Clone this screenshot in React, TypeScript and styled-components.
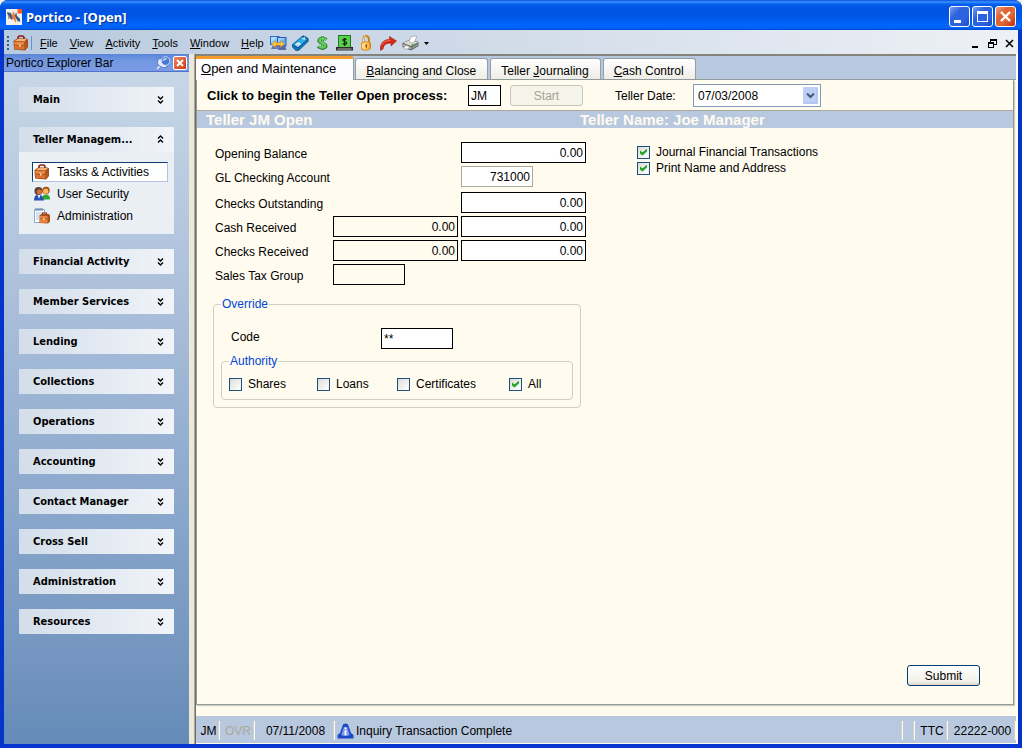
import React, { useState } from "react";
import styled, { createGlobalStyle, css } from "styled-components";

const Global = createGlobalStyle`
  * { box-sizing: border-box; }
  body { margin: 0; background: #f4f2e8; }
  body, button, input, select {
    font-family: "Liberation Sans", Arial, sans-serif;
    font-size: 12px;
    color: #000;
  }
  button { border: 0; background: none; padding: 0; }
`;

/* ---------- window frame ---------- */

const Window = styled.div`
  display: flex;
  flex-direction: column;
  min-height: 100vh;
  border-radius: 8px 8px 0 0;
  overflow: hidden;
  background: #0a4be0;
`;

const TitleBar = styled.header`
  display: flex;
  align-items: center;
  gap: 4px;
  height: 30px;
  padding: 3px 6px 0;
  background: linear-gradient(#0a4fdc 0, #3a93ff 2px, #0560ee 4px, #0053e2 8px, #0055e6 16px, #0066ff 25px, #0062f8 28px, #0048cc 30px);
`;

const Title = styled.h1`
  flex: 1;
  margin: 0;
  font: bold 13px/18px "Noto Sans", sans-serif;
  color: #fff;
  text-shadow: 1px 1px #0a2f8c;
`;

const CaptionButton = styled.button<{ $close?: boolean }>`
  display: flex;
  width: 21px;
  height: 21px;
  margin-left: -2px;
  border: 1px solid #fff;
  border-radius: 3px;
  background: ${(p) =>
    p.$close
      ? "linear-gradient(135deg, #eea08a, #e0602f 35%, #dd6a35 60%, #c22a0c)"
      : "linear-gradient(135deg, #7ba2f0, #2c62dc 35%, #2a63e2 70%, #1a48c0)"};
`;

const Frame = styled.div`
  display: flex;
  flex: 1;
  flex-direction: column;
  border: solid;
  border-width: 0 4px 4px;
  border-color: #0842dc #0535c8 #0636d0;
`;

/* ---------- menu bar ---------- */

const MenuBar = styled.nav`
  display: flex;
  align-items: center;
  height: 24px;
  padding: 2px 3px 0 3px;
  background: linear-gradient(90deg, #b8cadf, #cfdae8 45%, #eef1f6);
`;

const Grip = styled.span`
  width: 2px;
  height: 14px;
  margin-right: 4px;
  background: repeating-linear-gradient(#2c5f94 0 2px, transparent 2px 4px);
`;

const Divider = styled.span`
  width: 1px;
  height: 14px;
  margin: 0 2px 0 2px;
  background: #6a90c8;
`;

const MenuItem = styled.button`
  padding: 0 6px;
  font-size: 11px;
  line-height: 18px;
`;

const ToolButton = styled.button`
  display: flex;
  justify-content: center;
  width: 17px;
  margin-right: 5px;
`;

const Spacer = styled.span`
  flex: 1;
`;

const MdiButton = styled.button`
  display: flex;
  margin-left: 6px;
`;

const Body = styled.div`
  display: flex;
  flex: 1;
  background: #fffbef;
`;

/* ---------- explorer bar ---------- */

const Sidebar = styled.aside`
  display: flex;
  flex: none;
  flex-direction: column;
  width: 185px;
  background: linear-gradient(#c9d8e8, #afc2dc 32%, #8eaace 62%, #668bb8);
`;

const SidebarHeader = styled.div`
  display: flex;
  align-items: center;
  height: 18px;
  padding: 0 2px;
  border-bottom: 1px solid #5372cc;
  background: linear-gradient(#5a84d8, #7398e2 40%, #7b9be4);
`;

const SidebarTitle = styled.h2`
  flex: 1;
  margin: 0;
  font-size: 12px;
  font-weight: normal;
`;

const SidebarClose = styled.button`
  display: flex;
  width: 14px;
  height: 14px;
  margin-left: 2px;
  border: 1px solid #fff;
  border-radius: 2px;
  background: linear-gradient(135deg, #ee8460, #cf3a0c);
`;

const Groups = styled.div`
  display: flex;
  flex-direction: column;
  gap: 15px;
  padding: 15px;
`;

const GroupHeader = styled.button`
  display: flex;
  align-items: center;
  justify-content: space-between;
  width: 100%;
  height: 25px;
  padding: 0 9px 0 14px;
  font: bold 11px/16px "DejaVu Sans Condensed", "DejaVu Sans", sans-serif;
  background: linear-gradient(90deg, #d3deea, #f1f4f9);
`;

const GroupBody = styled.div`
  display: flex;
  flex-direction: column;
  gap: 2px;
  padding: 10px 6px 8px 13px;
  background: #eaeff4;
`;

const NavLink = styled.a<{ $active?: boolean }>`
  display: flex;
  align-items: center;
  gap: 7px;
  height: 20px;
  padding-left: 1px;
  border: 1px solid transparent;
  color: #000;
  text-decoration: none;
  ${(p) =>
    p.$active &&
    css`
      border-color: #0f3c6e #b0c4de #b0c4de #0f3c6e;
      background: #fff;
    `}
`;

/* ---------- work area ---------- */

const Splitter = styled.div`
  width: 7px;
  border-right: 1px solid #6e6d66;
  background: linear-gradient(90deg, #ece9d8 5px, #aca899 5px);
`;

const Work = styled.main`
  display: flex;
  flex: 1;
  flex-direction: column;
  min-width: 0;
  margin-right: 2px;
  border-top: 2px solid #84847c;
`;

const TabStrip = styled.div`
  display: flex;
  align-items: flex-end;
  gap: 2px;
  height: 24px;
  border-bottom: 1px solid #919b9c;
  background: #b8c9df;
`;

const Tab = styled.button<{ $active?: boolean }>`
  height: 21px;
  padding: 3px 11px 0 10px;
  border: 1px solid #91a0a8;
  border-bottom: 0;
  border-radius: 3px 3px 0 0;
  font-size: 12px;
  line-height: 14px;
  background: linear-gradient(#fff, #eeede6);
  ${(p) =>
    p.$active &&
    css`
      height: 24px;
      margin: 0 -1px -1px 0;
      padding: 0 17px 2px 5px;
      border-width: 3px 1px 0 0;
      border-color: #f29a2c #91a0a8 #fff;
      border-radius: 0 3px 0 0;
      font-size: 13px;
      background: #fcfcfe;
    `}
`;

const Page = styled.form`
  display: flex;
  flex: 1;
  flex-direction: column;
  margin-right: 2px;
  border: solid #919b9c;
  border-width: 0 1px 1px;
  box-shadow: 1px 1px 1px #d0cec0;
`;

const StartRow = styled.div`
  display: flex;
  align-items: center;
  height: 30px;
  padding: 1px 10px 0;
`;

const Prompt = styled.label`
  width: 261px;
  font-size: 13px;
  font-weight: bold;
`;

const TextBox = styled.input<{ $w: number; $tone?: "clear" | "muted" }>`
  width: ${(p) => p.$w}px;
  height: 21px;
  padding: 0 2px;
  border: 1px solid ${(p) => (p.$tone === "muted" ? "#aca899" : "#000")};
  border-radius: 0;
  background: ${(p) => (p.$tone === "clear" ? "transparent" : "#fff")};
  outline: 0;
`;

const Amount = styled(TextBox)`
  text-align: right;
`;

const PushButton = styled.button`
  width: 73px;
  height: 21px;
  border: 1px solid #003c74;
  border-radius: 3px;
  background: linear-gradient(#fff, #f3f1e9 80%, #dcd8cc);
  &:disabled {
    margin: 0 32px 0 9px;
    border-color: #c9c7ba;
    color: #a5a28f;
    background: #f5f4ea;
  }
`;

const DateLabel = styled.label`
  width: 78px;
`;

const DateField = styled.div`
  position: relative;
  width: 128px;
  svg {
    position: absolute;
    top: 3px;
    right: 3px;
    pointer-events: none;
  }
`;

const DateSelect = styled.select`
  display: block;
  width: 100%;
  height: 23px;
  padding: 0 4px;
  border: 1px solid #7f9db9;
  border-radius: 0;
  background: #fff;
  appearance: none;
`;

const Band = styled.div`
  display: grid;
  grid-template-columns: 374px 1fr;
  height: 18px;
  padding-left: 9px;
  border-top: 1px solid #aca899;
  font-size: 15px;
  font-weight: bold;
  line-height: 17px;
  color: #fffbef;
  background: #b8c9df;
`;

const Columns = styled.div`
  display: flex;
  gap: 49px;
  padding: 14px 16px 0 18px;
`;

const Fields = styled.div`
  display: flex;
  flex-direction: column;
  width: 373px;
  gap: 3px;
`;

const Row = styled.div<{ $tall?: boolean }>`
  display: grid;
  grid-template-columns: 115px 125px 125px;
  column-gap: 3px;
  height: ${(p) => (p.$tall ? 23 : 21)}px;
`;

const RowLabel = styled.label<{ $wide?: boolean }>`
  grid-column: ${(p) => (p.$wide ? "1 / 3" : "1")};
  padding-top: 4px;
  line-height: 17px;
  white-space: nowrap;
`;

const Options = styled.div`
  display: flex;
  flex-direction: column;
  gap: 2px;
  padding-top: 3px;
`;

const CheckLabel = styled.label`
  display: flex;
  align-items: center;
  gap: 6px;
  line-height: 14px;
`;

const CheckBox = styled.input.attrs({ type: "checkbox" })`
  width: 13px;
  height: 13px;
  margin: 0;
  border: 1px solid #1d5180;
  background: linear-gradient(135deg, #dcdcd6, #fff);
  appearance: none;
  &:checked::after {
    content: "";
    display: block;
    width: 7px;
    height: 7px;
    margin: 2px;
    background: #21a121;
    clip-path: polygon(0 28%, 36% 58%, 100% 0, 100% 40%, 36% 100%, 0 70%);
  }
`;

const Group = styled.fieldset`
  min-width: 0;
  margin: 0;
  padding: 0 7px 7px;
  border: 1px solid #d0d0bf;
  border-radius: 4px;
`;

const Override = styled(Group)`
  width: 368px;
  margin: 12px 16px 0;
`;

const Legend = styled.legend`
  padding: 0 1px;
  line-height: 14px;
  color: #0046d5;
`;

const CodeRow = styled.div`
  display: grid;
  grid-template-columns: 150px 1fr;
  padding: 17px 10px 5px;
  line-height: 18px;
`;

const Authority = styled.div`
  display: grid;
  grid-template-columns: 88px 80px 112px 1fr;
  padding: 9px 0 1px;
`;

const Actions = styled.div`
  display: flex;
  justify-content: flex-end;
  margin-top: auto;
  padding: 0 33px 18px;
`;

const StatusBar = styled.footer`
  display: flex;
  align-items: center;
  height: 27px;
  margin: 11px 0 1px;
  padding-top: 2px;
  background: #b8c9df;
`;

const StatusCell = styled.span<{ $w?: number; $dim?: boolean }>`
  display: flex;
  flex: ${(p) => (p.$w ? "none" : 1)};
  gap: 2px;
  align-items: center;
  justify-content: ${(p) => (p.$w ? "center" : "flex-start")};
  width: ${(p) => (p.$w ? p.$w + "px" : "auto")};
  height: 19px;
  padding-left: 2px;
  border-right: 1px solid #fffbef;
  box-shadow: inset -1px 0 #d4d0c4;
  color: ${(p) => (p.$dim ? "#aca899" : "#000")};
`;

/* ---------- icons ---------- */

const Briefcase = () => (
  <svg width="16" height="16" viewBox="0 0 16 16">
    <path d="M5 5V3q0-2 2-2h2q2 0 2 2v1" fill="none" stroke="#8c1c14" strokeWidth="1.600" />
    <path d="M.5 6L4 3.500h9.500L15 4.500v7.500l-3 3.500L1 14.500z" fill="#8a4414" />
    <path d="M1 6.500l10.500.5v7.800L1.500 14z" fill="#dc7030" />
    <path d="M12 7l2.500-2v7L12 14.500z" fill="#b85a20" />
    <path d="M1.500 6L4.500 4H14l-2.500 2.500z" fill="#f8b070" />
    <path d="M1.500 7.200l9.500.4v2l-4.500.8-5-1.200z" fill="#ec8c48" />
    <path d="M1.500 9.600l5 1.200 5-.8 3-2.600" fill="none" stroke="#9c4818" strokeWidth=".8" />
    <path d="M6 9.500h1.600v2H6z" fill="#ffe08a" />
  </svg>
);

const PorticoLogo = () => (
  <svg width="16" height="16" viewBox="0 0 16 16">
    <path d="M0 0h16v16H0z" fill="#f4f1ea" />
    <path d="M11.500 0H16v4.500h-4.500z" fill="#f8601c" />
    <path d="M1 3l4 1 2 5-1 2-4-4z" fill="#4c5c78" />
    <path d="M2 6l3 4H2z" fill="#a8a090" />
    <path d="M7 2l2.500 5 .5 7-4-6z" fill="#f0762c" />
    <path d="M10 3l1 4 3 3v3l-3-2-2-4z" fill="#2c4c80" />
    <path d="M10 11l3 1-1 1.500z" fill="#b0a890" />
  </svg>
);

const Monitors = () => (
  <svg width="17" height="16" viewBox="0 0 17 16">
    <path d="M3 10h5l1 4H1z" fill="#6878b0" />
    <path d="M9 11h6l1.500 4H8z" fill="#586aa8" />
    <path d="M0 1h9.500v9H0z" fill="#3468c4" />
    <path d="M1 2h7.500v7H1z" fill="#7cc8fc" />
    <path d="M1 2h7L1 7z" fill="#a8e0ff" />
    <path d="M7 2h9.500v9.500H7z" fill="#2c58b4" />
    <path d="M8 3h7.500v7.500H8z" fill="#60acf4" />
    <path d="M8 3h7L8 8z" fill="#94d0ff" />
    <path d="M1.500 9l4-3.500v2.200h5V5.500l4 3.500-4 3.500v-2.200h-5v2.200z" fill="#ffc440" stroke="#c88010" strokeWidth=".5" />
  </svg>
);

const Tag = () => (
  <svg width="17" height="17" viewBox="0 0 17 17">
    <path d="M0 9.500L9 2l2-1.500 2 .5 3.500 2.500v3L7 15.500l-3 .5L.5 12.500z" fill="#0a4884" />
    <path d="M1 9.500L10 2l5.500 2L6 12.500z" fill="#2cb0e4" />
    <path d="M1 10.200l5 3v2l-2 .2L1 12.300z" fill="#1478b8" />
    <path d="M6.500 13.200L15.500 5v1.500L7 14.500z" fill="#1888c8" />
    <path d="M3 9.500l3-2.300 3.200 1.600L6 11.500z" fill="#e4f6ff" />
    <path d="M5 9l2 .6-1.500 1z" fill="#e07070" />
    <path d="M11 2.500l2.500 1-1 1.200-2.500-1z" fill="#d8f2ff" />
    <path d="M12.500 3l1-3" stroke="#70d0f8" />
  </svg>
);

const Dollar = () => (
  <svg width="13" height="16" viewBox="0 0 13 16">
    <path d="M10.500 4.500Q8 2.500 5 3.500T3 6.500q1 1.500 4 2t3 3Q9 13.500 6 13t-4-1.500M6.500 1v14" fill="none" stroke="#2c7c34" strokeWidth="3" />
    <path d="M10 4.500Q8 3 5.200 3.700T3.500 6.300q1 1.200 3.500 1.700t2.500 3Q8.500 13 6 12.500T2.500 11M6.500 1v13" fill="none" stroke="#64cc5c" strokeWidth="1.800" />
  </svg>
);

const CashDrawer = () => (
  <svg width="17" height="16" viewBox="0 0 17 16">
    <path d="M2 0h13v13H2z" fill="#1c7a22" />
    <path d="M3 1h11v11H3z" fill="#5cd04c" />
    <path d="M0 12h17v3.500H0z" fill="#2c2c2c" />
    <path d="M1.500 13.500h14v1h-14z" fill="#b0b0a8" />
    <path d="M10.500 4.300q-4-1-3.500 1 .3 1 2 1.200t1.700 1.500q-.5 1.800-4 .6M8.700 3v8" fill="none" stroke="#0a2c0c" strokeWidth="1.200" />
  </svg>
);

const Padlock = () => (
  <svg width="12" height="16" viewBox="0 0 12 16">
    <path d="M3.500 8V4q0-3 2.500-3t3 3v4" fill="none" stroke="#c48420" strokeWidth="2" />
    <path d="M3.500 7V4q0-2.500 2.500-2.800" fill="none" stroke="#ffe49a" strokeWidth=".9" />
    <path d="M1 8l3-1.500h5L11 8v5.500L8 15.500H3L1 14z" fill="#d08018" />
    <path d="M1.500 8.500L4 7.200h4.500L9.500 8v5.500l-2 1.200H3.200L1.500 13.500z" fill="#ffb840" />
    <path d="M2 9l2-1.200h2V14H3.500L2 13z" fill="#ffda84" />
    <path d="M5.500 9.500h1.500v3H5.500z" fill="#8a4c0c" />
  </svg>
);

const RedArrow = () => (
  <svg width="17" height="16" viewBox="0 0 17 16">
    <path d="M.5 15.500Q-.5 5 9.500 4.300V1.500l7 4.500-5.500 5V8Q3.500 8 3 14z" fill="#d82818" stroke="#901408" strokeWidth=".5" />
    <path d="M1.500 10.500Q3.500 5.500 10.500 5.300" fill="none" stroke="#f4705c" />
  </svg>
);

const Printer = () => (
  <svg width="17" height="16" viewBox="0 0 17 16">
    <path d="M.5 8L8 4.500l8.500 2.500v4L9 15.500.5 12z" fill="#5c5c5c" />
    <path d="M1.200 8L8 5l8 2.200L9 11z" fill="#dcdcd6" />
    <path d="M7 6l2.500-4.500L15 1l-2.500 6L9 8z" fill="#fff" stroke="#909090" strokeWidth=".6" />
    <path d="M1.200 9l7.600 3v2.600L1.200 11.500z" fill="#bcbcb6" />
    <path d="M9.500 12l6.500-4v2.500l-6.500 4z" fill="#909088" />
    <path d="M1.500 12.500l3.500-2 3 1.500-3.500 2.500z" fill="#fff" stroke="#777" strokeWidth=".5" />
    <path d="M9.500 10.500l2-1" stroke="#2cb83c" strokeWidth="1.500" />
  </svg>
);

const Pin = () => (
  <svg width="15" height="14" viewBox="0 0 15 14">
    <path d="M1 13l4-4" stroke="#e8eefc" strokeWidth="1.500" />
    <path d="M3 2.500Q-.5 7 3.500 10t8 1L10 8 5 3z" fill="#e4ecfc" stroke="#3c64b4" strokeWidth=".8" />
    <circle cx="9.500" cy="5" r="4.300" fill="#4478d4" stroke="#dce8ff" strokeWidth=".8" />
    <path d="M6.500 5.500q0-3 3-3.500l2 1-3.500 1.500z" fill="#c4dafc" />
  </svg>
);

const People = () => (
  <svg width="16" height="16" viewBox="0 0 16 16">
    <path d="M8 13.500q0-5 4-5t4 5z" fill="#2fa82c" />
    <circle cx="12" cy="4.500" r="3.700" fill="#a44c10" />
    <circle cx="11.800" cy="5.200" r="2.600" fill="#ffb45c" />
    <path d="M0 14.500Q0 8.500 4.500 8.500T10 14.500z" fill="#2450b8" />
    <path d="M3.500 9l1.500 4 1.500-4z" fill="#dce8ff" />
    <circle cx="4.500" cy="5" r="4" fill="#54403a" />
    <circle cx="5.300" cy="5.800" r="2.600" fill="#d4703c" />
  </svg>
);

const Clipboard = () => (
  <svg width="16" height="16" viewBox="0 0 16 16">
    <path d="M.5 1.500h10v13H.5z" fill="#fff" stroke="#8ca8cc" />
    <path d="M2 0v3M4 0v3M6 0v3M8 0v3" stroke="#5878a8" />
    <path d="M2 5h7M2 7h5M2 9h3M2 11h3" stroke="#a8c4e8" />
    <path d="M8.500 7V5h4v2" fill="none" stroke="#8c2a18" strokeWidth="1.200" />
    <path d="M5.500 7.500l2-1.500h7l1.500 1v6.500l-2 2-8.500-.5z" fill="#a85018" />
    <path d="M6 8h7.500v6.700H6z" fill="#e88440" />
    <path d="M6.500 10.500q3 1.500 6.500 0" stroke="#9c4818" strokeWidth=".8" fill="none" />
    <path d="M9 10h1.500v2H9z" fill="#ffe08a" />
  </svg>
);

const Chevrons = ({ up }: { up?: boolean }) => (
  <svg width="9" height="9" viewBox="0 0 9 9">
    <path
      d={up ? "M2 3.500L4.500 1 7 3.500M2 7.500L4.500 5 7 7.500" : "M2 1.500L4.500 4 7 1.500M2 5.500L4.500 8 7 5.500"}
      fill="none"
      stroke="#000"
      strokeWidth="1.400"
    />
  </svg>
);

const InfoCone = () => (
  <svg width="17" height="16" viewBox="0 0 17 16">
    <path d="M6 1.500Q8.500-.5 11 1.500L14 10l2.500 2v3.500H.5V12L3 10z" fill="#1c48cc" />
    <path d="M6.800 4h3.400l2.600 8q-4.300 2-8.600 0z" fill="#7c9ce8" />
    <path d="M8.500 4.500v1.800M8.500 7.300v5" stroke="#fff" strokeWidth="1.800" />
  </svg>
);

const ComboArrow = () => (
  <svg width="15" height="17" viewBox="0 0 15 17">
    <rect width="15" height="17" rx="1" fill="#bfd0f6" />
    <path d="M1 16h13V1" fill="none" stroke="#a8bdf0" />
    <path d="M4 6.500l3.500 3.500L11 6.500" fill="none" stroke="#45587c" strokeWidth="2" />
  </svg>
);

/* ---------- data ---------- */

const menus = ["File", "View", "Activity", "Tools", "Window", "Help"];
const tools = [Monitors, Tag, Dollar, CashDrawer, Padlock, RedArrow, Printer];
const toolNames = ["Connect", "Tag", "Money", "Cash drawer", "Lock", "Forward", "Print"];
const groups = [
  "Main", "Teller Managem...", "Financial Activity", "Member Services", "Lending", "Collections",
  "Operations", "Accounting", "Contact Manager", "Cross Sell", "Administration", "Resources",
];
const tabs: [string, string, string][] = [
  ["", "O", "pen and Maintenance"],
  ["", "B", "alancing and Close"],
  ["Teller ", "J", "ournaling"],
  ["", "C", "ash Control"],
];

const Check = ({ text, on }: { text: string; on?: boolean }) => (
  <CheckLabel>
    <CheckBox defaultChecked={on} />
    {text}
  </CheckLabel>
);

export default function App() {
  const [tab, setTab] = useState(0);
  return (
    <Window>
      <Global />
      <TitleBar>
        <PorticoLogo />
        <Title>Portico - [Open]</Title>
        <CaptionButton aria-label="Minimize">
          <svg width="19" height="19"><path d="M4 13h7v3H4z" fill="#fff" /></svg>
        </CaptionButton>
        <CaptionButton aria-label="Maximize">
          <svg width="19" height="19"><path d="M4 4h11v11H4zM5 7v7h9V7z" fill="#fff" fillRule="evenodd" /></svg>
        </CaptionButton>
        <CaptionButton $close aria-label="Close">
          <svg width="19" height="19"><path d="M5 5l9 9M14 5l-9 9" stroke="#fff" strokeWidth="2.400" /></svg>
        </CaptionButton>
      </TitleBar>
      <Frame>
        <MenuBar>
          <Grip />
          <Briefcase />
          <Divider />
          {menus.map((m) => (
            <MenuItem key={m}><u>{m[0]}</u>{m.slice(1)}</MenuItem>
          ))}
          {tools.map((Icon, i) => (
            <ToolButton key={i} aria-label={toolNames[i]}><Icon /></ToolButton>
          ))}
          <svg width="5" height="3"><path d="M0 0h5L2.500 3z" /></svg>
          <Spacer />
          <MdiButton aria-label="Minimize child">
            <svg width="11" height="11"><path d="M2 8h6v2H2z" /></svg>
          </MdiButton>
          <MdiButton aria-label="Restore child">
            <svg width="11" height="11">
              <path d="M3 1h7v6H7V6h2V3H4v1H3z" />
              <path d="M1 4h6v6H1zM2 6v3h4V6z" fillRule="evenodd" />
            </svg>
          </MdiButton>
          <MdiButton aria-label="Close child">
            <svg width="11" height="11"><path d="M2 2l7 7M9 2l-7 7" stroke="#000" strokeWidth="1.600" /></svg>
          </MdiButton>
        </MenuBar>
        <Body>
          <Sidebar>
            <SidebarHeader>
              <SidebarTitle>Portico Explorer Bar</SidebarTitle>
              <Pin />
              <SidebarClose aria-label="Close explorer bar">
                <svg width="12" height="12"><path d="M3 3l6 6M9 3L3 9" stroke="#fff" strokeWidth="2" /></svg>
              </SidebarClose>
            </SidebarHeader>
            <Groups>
              {groups.map((g, i) => (
                <section key={g}>
                  <GroupHeader>
                    {g}
                    <Chevrons up={i === 1} />
                  </GroupHeader>
                  {i === 1 && (
                    <GroupBody>
                      <NavLink href="#tasks" $active><Briefcase />Tasks &amp; Activities</NavLink>
                      <NavLink href="#security"><People />User Security</NavLink>
                      <NavLink href="#admin"><Clipboard />Administration</NavLink>
                    </GroupBody>
                  )}
                </section>
              ))}
            </Groups>
          </Sidebar>
          <Splitter />
          <Work>
            <TabStrip role="tablist">
              {tabs.map(([pre, key, post], i) => (
                <Tab key={post} role="tab" aria-selected={tab === i} $active={tab === i} onClick={() => setTab(i)}>
                  {pre}<u>{key}</u>{post}
                </Tab>
              ))}
            </TabStrip>
            <Page onSubmit={(e) => e.preventDefault()}>
              <StartRow>
                <Prompt htmlFor="teller">Click to begin the Teller Open process:</Prompt>
                <TextBox id="teller" $w={33} defaultValue="JM" />
                <PushButton type="button" disabled>Start</PushButton>
                <DateLabel htmlFor="date">Teller Date:</DateLabel>
                <DateField>
                  <DateSelect id="date"><option>07/03/2008</option></DateSelect>
                  <ComboArrow />
                </DateField>
              </StartRow>
              <Band>
                <span>Teller JM Open</span>
                <span>Teller Name: Joe Manager</span>
              </Band>
              <Columns>
                <Fields>
                  <Row>
                    <RowLabel $wide htmlFor="opening">Opening Balance</RowLabel>
                    <Amount id="opening" $w={125} defaultValue="0.00" />
                  </Row>
                  <Row $tall>
                    <RowLabel $wide htmlFor="gl">GL Checking Account</RowLabel>
                    <Amount id="gl" $w={72} $tone="muted" defaultValue="731000" />
                  </Row>
                  <Row>
                    <RowLabel $wide htmlFor="outstanding">Checks Outstanding</RowLabel>
                    <Amount id="outstanding" $w={125} defaultValue="0.00" />
                  </Row>
                  <Row>
                    <RowLabel htmlFor="cash">Cash Received</RowLabel>
                    <Amount id="cash" $w={125} $tone="clear" readOnly defaultValue="0.00" />
                    <Amount aria-label="Cash received amount" $w={125} defaultValue="0.00" />
                  </Row>
                  <Row>
                    <RowLabel htmlFor="checks">Checks Received</RowLabel>
                    <Amount id="checks" $w={125} $tone="clear" readOnly defaultValue="0.00" />
                    <Amount aria-label="Checks received amount" $w={125} defaultValue="0.00" />
                  </Row>
                  <Row>
                    <RowLabel htmlFor="tax">Sales Tax Group</RowLabel>
                    <TextBox id="tax" $w={72} $tone="clear" />
                  </Row>
                </Fields>
                <Options>
                  <Check text="Journal Financial Transactions" on />
                  <Check text="Print Name and Address" on />
                </Options>
              </Columns>
              <Override>
                <Legend>Override</Legend>
                <CodeRow>
                  <label htmlFor="code">Code</label>
                  <TextBox id="code" $w={72} defaultValue="**" />
                </CodeRow>
                <Group>
                  <Legend>Authority</Legend>
                  <Authority>
                    <Check text="Shares" />
                    <Check text="Loans" />
                    <Check text="Certificates" />
                    <Check text="All" on />
                  </Authority>
                </Group>
              </Override>
              <Actions>
                <PushButton type="submit">Submit</PushButton>
              </Actions>
            </Page>
            <StatusBar>
              <StatusCell $w={24}>JM</StatusCell>
              <StatusCell $w={35} $dim>OVR</StatusCell>
              <StatusCell $w={80}>07/11/2008</StatusCell>
              <StatusCell><InfoCone />Inquiry Transaction Complete</StatusCell>
              <StatusCell $w={12} />
              <StatusCell $w={33}>TTC</StatusCell>
              <StatusCell $w={68}>22222-000</StatusCell>
            </StatusBar>
          </Work>
        </Body>
      </Frame>
    </Window>
  );
}
